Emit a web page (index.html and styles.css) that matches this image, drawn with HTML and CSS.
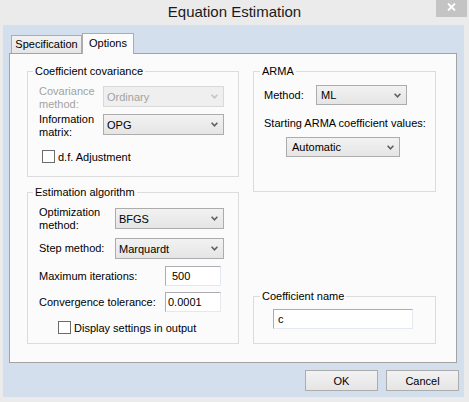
FILE: index.html
```html
<!DOCTYPE html>
<html>
<head>
<meta charset="utf-8">
<link rel="stylesheet" href="styles.css">
</head>
<body>
<div class="window">
  <div class="titlebar">
    <span class="title">Equation Estimation</span>
    <span class="close"><svg width="9" height="8" viewBox="0 0 9 8"><path d="M1 0.5 L8 7.5 M8 0.5 L1 7.5" stroke="#fff" stroke-width="1.8" fill="none"/></svg></span>
  </div>
  <div class="client">
    <div class="tabs">
      <div class="tab spec">Specification</div>
      <div class="tab active">Options</div>
    </div>
    <div class="panel">
      <div class="col">
        <div class="group g-cov">
          <div class="legend">Coefficient covariance</div>
          <div class="row r-cov1">
            <div class="lbl disabled">Covariance<br>method:</div>
            <div class="combo disabled w121"><span>Ordinary</span><svg width="7" height="5" viewBox="0 0 7 5"><path d="M0.6 0.8 L3.5 3.8 L6.4 0.8" stroke="#c4c4c4" stroke-width="1.6" fill="none"/></svg></div>
          </div>
          <div class="row r-cov2">
            <div class="lbl">Information<br>matrix:</div>
            <div class="combo w121"><span>OPG</span><svg width="7" height="5" viewBox="0 0 7 5"><path d="M0.6 0.8 L3.5 3.8 L6.4 0.8" stroke="#606060" stroke-width="1.6" fill="none"/></svg></div>
          </div>
          <div class="check c-df"><span class="box"></span><span>d.f. Adjustment</span></div>
        </div>
        <div class="group g-est">
          <div class="legend">Estimation algorithm</div>
          <div class="row r-opt">
            <div class="lbl">Optimization<br>method:</div>
            <div class="combo w109"><span>BFGS</span><svg width="7" height="5" viewBox="0 0 7 5"><path d="M0.6 0.8 L3.5 3.8 L6.4 0.8" stroke="#606060" stroke-width="1.6" fill="none"/></svg></div>
          </div>
          <div class="row r-step">
            <div class="lbl">Step method:</div>
            <div class="combo w109"><span>Marquardt</span><svg width="7" height="5" viewBox="0 0 7 5"><path d="M0.6 0.8 L3.5 3.8 L6.4 0.8" stroke="#606060" stroke-width="1.6" fill="none"/></svg></div>
          </div>
          <div class="row r-num r-max">
            <div class="lbl">Maximum iterations:</div>
            <div class="field f-max">500</div>
          </div>
          <div class="row r-num r-conv">
            <div class="lbl">Convergence tolerance:</div>
            <div class="field f-conv">0.0001</div>
          </div>
          <div class="check c-disp"><span class="box"></span><span>Display settings in output</span></div>
        </div>
      </div>
      <div class="col right">
        <div class="group g-arma">
          <div class="legend">ARMA</div>
          <div class="row r-method">
            <div class="lbl">Method:</div>
            <div class="combo w91 h20"><span>ML</span><svg width="7" height="5" viewBox="0 0 7 5"><path d="M0.6 0.8 L3.5 3.8 L6.4 0.8" stroke="#606060" stroke-width="1.6" fill="none"/></svg></div>
          </div>
          <div class="start-lbl">Starting ARMA coefficient values:</div>
          <div class="combo w114 h20 c-auto"><span>Automatic</span><svg width="7" height="5" viewBox="0 0 7 5"><path d="M0.6 0.8 L3.5 3.8 L6.4 0.8" stroke="#606060" stroke-width="1.6" fill="none"/></svg></div>
        </div>
        <div class="group g-name">
          <div class="legend">Coefficient name</div>
          <div class="field f-name">c</div>
        </div>
      </div>
    </div>
    <div class="buttons">
      <div class="btn">OK</div>
      <div class="btn">Cancel</div>
    </div>
  </div>
</div>
</body>
</html>
```

FILE: styles.css
```css
* { box-sizing: border-box; }
html, body { margin: 0; padding: 0; }
body {
  width: 469px;
  height: 402px;
  overflow: hidden;
  background: #f3f3f3;
  font-family: "Liberation Sans", Arial, sans-serif;
  font-size: 11px;
  color: #000;
}
.window {
  width: 469px;
  height: 402px;
  display: flex;
  flex-direction: column;
  background: #ebebeb;
}
.titlebar {
  height: 25px;
  position: relative;
  display: flex;
  align-items: center;
  justify-content: center;
}
.title {
  font-size: 15px;
  line-height: 18px;
  color: #1a1a1a;
  margin-top: -1px;
}
.close {
  position: absolute;
  right: 2px;
  top: 0;
  width: 31px;
  height: 17px;
  background: #c4c4c4;
  display: flex;
  justify-content: center;
  align-items: flex-start;
  padding-top: 3px;
}
.close svg { display: block; }
.client {
  flex: 1;
  margin: 0 5px 5px 3px;
  background: #d4dfee;
  display: flex;
  flex-direction: column;
  padding: 8px 0 6px 0;
}
.tabs {
  display: flex;
  align-items: flex-end;
  height: 20px;
  margin-left: 8px;
  position: relative;
  z-index: 1;
}
.tab {
  height: 18px;
  border: 1px solid #acacac;
  border-bottom: none;
  background: linear-gradient(#f2f2f2, #e6e6e6);
  display: flex;
  align-items: center;
  justify-content: center;
  padding-bottom: 1px;
}
.tab.spec { width: 71px; }
.tab.active {
  width: 52px;
  height: 21px;
  margin-bottom: -1px;
  background: #fbfbfb;
  padding-bottom: 3px;
}
.panel {
  margin: 0 7px 0 6px;
  height: 310px;
  border: 1px solid #a3a3a3;
  background: #fbfbfb;
  display: grid;
  grid-template-columns: 212px 183px;
  column-gap: 14px;
  padding: 17px 0 18px 17px;
}
.col {
  display: flex;
  flex-direction: column;
  gap: 15px;
}
.col.right { justify-content: space-between; }
.group {
  border: 1px solid #dcdcdc;
}
.legend {
  margin-top: -7px;
  line-height: 13px;
  width: max-content;
  padding: 0 2px;
  background: #fbfbfb;
  margin-left: 5px;
}
.g-arma .legend, .g-name .legend { margin-left: 6px; }
.lbl { line-height: 13px; white-space: nowrap; }
.disabled { color: #a2a2a2; }
.row { display: grid; margin-left: 11px; }
.combo {
  height: 21px;
  border: 1px solid #acacac;
  background: linear-gradient(#f2f2f2, #e5e5e5);
  display: flex;
  align-items: center;
  justify-content: space-between;
  padding: 0 5px 0 3px;
}
.combo svg { display: block; }
.combo.disabled {
  border-color: #d9d9d9;
  background: #efefef;
}
.h20 { height: 20px; }
.w121 { width: 121px; }
.w109 { width: 109px; }
.w91 { width: 91px; }
.w114 { width: 114px; }
.field {
  height: 20px;
  background: #fff;
  border: 1px solid #e3e9ef;
  border-top-color: #abadb3;
  border-left-color: #abadb3;
  display: flex;
  align-items: center;
  padding-left: 2px;
}
.check {
  display: flex;
  align-items: center;
  gap: 3px;
  height: 13px;
}
.box {
  width: 13px;
  height: 13px;
  border: 1px solid #6b6b6b;
  background: #fff;
}

/* Coefficient covariance */
.g-cov { padding-bottom: 13px; }
.r-cov1, .r-cov2 { grid-template-columns: 64px 121px; align-items: start; }
.r-cov1 .combo, .r-cov2 .combo { margin-top: 1px; }
.r-cov1 { margin-top: 7px; }
.r-cov2 { margin-top: 2px; }
.c-df { margin: 11px 0 0 14px; }

/* Estimation algorithm */
.g-est { padding-bottom: 9px; }
.r-opt, .r-step { grid-template-columns: 76px 109px; }
.r-opt { margin-top: 7px; align-items: start; }
.r-opt .combo { margin-top: 2px; }
.r-step { margin-top: 6px; align-items: center; }
.r-num { grid-template-columns: 126px 56px; align-items: center; }
.r-max { margin-top: 7px; }
.r-conv { margin-top: 6px; }
.f-max { padding-left: 6px; }
.c-disp { margin: 9px 0 0 30px; }

/* ARMA */
.g-arma { padding-bottom: 34px; }
.r-method { margin: 7px 0 0 10px; grid-template-columns: 52px 91px; align-items: center; }
.r-method .combo { padding-left: 4px; }
.start-lbl { margin: 12px 0 0 10px; line-height: 13px; }
.c-auto { margin: 7px 0 0 32px; padding-left: 5px; }

/* Coefficient name */
.g-name { padding-bottom: 14px; }
.f-name { margin: 6px 0 0 19px; width: 140px; padding-left: 4px; }

/* Buttons */
.buttons {
  display: flex;
  justify-content: flex-end;
  gap: 8px;
  margin: 7px 5px 0 0;
}
.btn {
  width: 73px;
  height: 21px;
  border: 1px solid #acacac;
  background: linear-gradient(#f2f2f2, #e5e5e5);
  display: flex;
  align-items: center;
  justify-content: center;
}
```
